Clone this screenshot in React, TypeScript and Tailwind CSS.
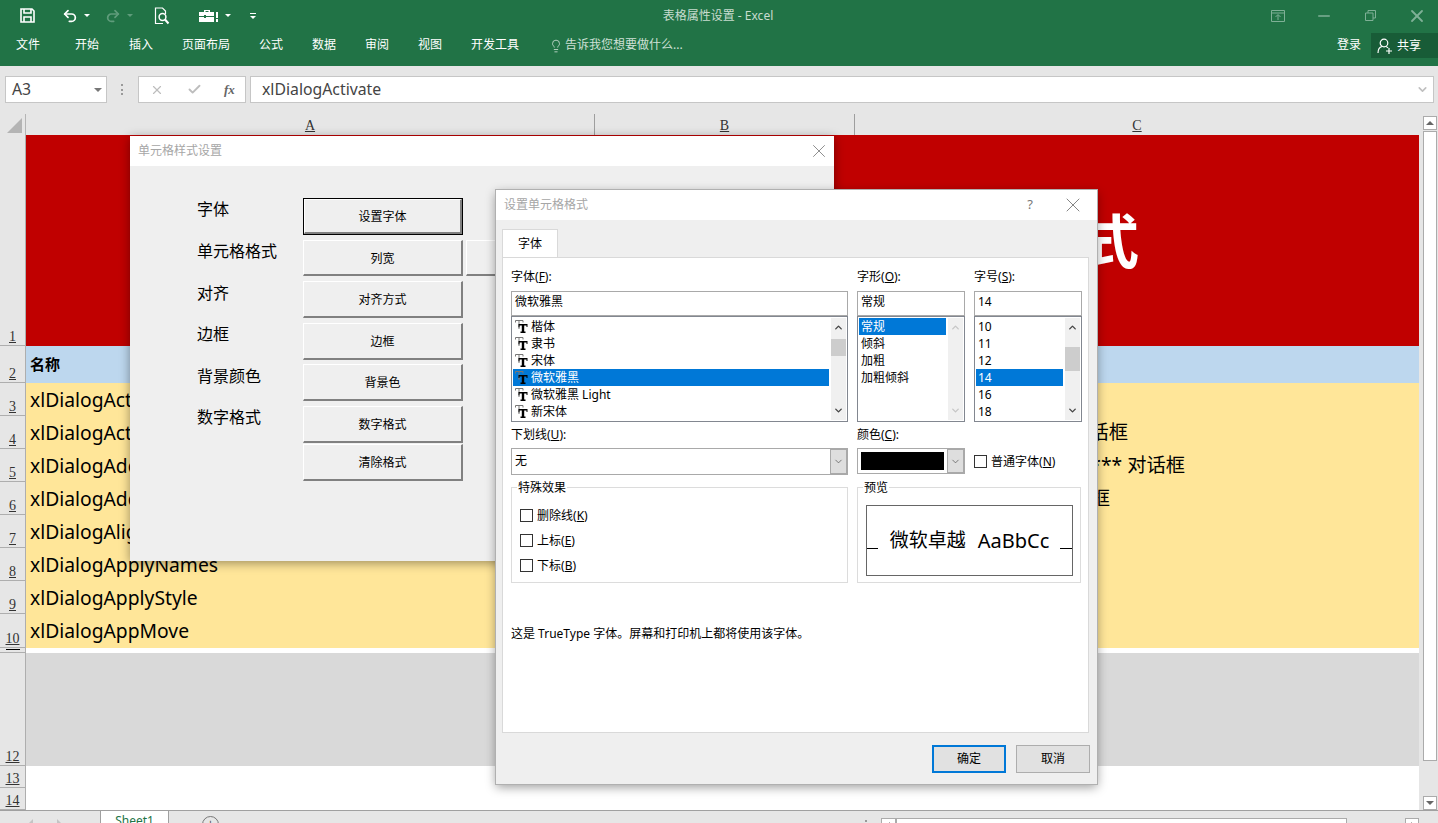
import React from 'react';
import { ChevronDown, ChevronUp, Lightbulb, Minus, Undo2, Redo2, X, Check } from 'lucide-react';

const serif = "font-['Liberation_Serif','Noto_Sans_CJK_SC',serif]";

const tabs = [
  ['文件', 'w-[75px] pl-[16px]'],
  ['开始', 'w-[54px]'],
  ['插入', 'w-[53px]'],
  ['页面布局', 'w-[77px]'],
  ['公式', 'w-[53px]'],
  ['数据', 'w-[53px]'],
  ['审阅', 'w-[53px]'],
  ['视图', 'w-[53px]'],
  ['开发工具', 'w-[78px]'],
];

function TitleBar() {
  return (
    <div className="relative flex h-[31px] items-center bg-[#217346] text-white">
      <svg className="ml-[20px] h-[15px] w-[15px]" viewBox="0 0 15 15" fill="none" stroke="white" strokeWidth="1.6">
        <path d="M1 1h11l2 2v11H1z" />
        <path d="M4 1v4h7V1M4 14V9h7v5" />
      </svg>
      <Undo2 className="ml-[27px] h-[16px] w-[16px]" strokeWidth={2.6} />
      <span className="ml-[6px] h-0 w-0 border-x-[3px] border-t-[3px] border-x-transparent border-t-white" />
      <Redo2 className="ml-[15px] h-[16px] w-[16px] text-[#5f9c7b]" strokeWidth={2.6} />
      <span className="ml-[6px] h-0 w-0 border-x-[3px] border-t-[3px] border-x-transparent border-t-[#5f9c7b]" />
      <svg className="ml-[21px] h-[18px] w-[16px]" viewBox="0 0 16 18" fill="none" stroke="white" strokeWidth="1.2">
        <path d="M9 16.5H1.5V1h7l3 3v3" />
        <circle cx="8.5" cy="10" r="3.4" strokeWidth="1.5" />
        <path d="M11 12.5l3.5 4" strokeWidth="2" />
      </svg>
      <svg className="ml-[29px] h-[14px] w-[20px]" viewBox="0 0 20 14" fill="white">
        <path d="M5 3V1h6v2h4v4H7V6H5v1H0V3zM6.500 2v1h3V2z" />
        <path d="M0 8h5v1h2V8h8v5H0zM17 3h2v6h-2zM17 10h2v3h-2z" />
      </svg>
      <span className="ml-[6px] h-0 w-0 border-x-[3px] border-t-[3px] border-x-transparent border-t-white" />
      <div className="ml-[19px] flex flex-col items-center gap-[2px]">
        <span className="h-px w-[6px] bg-white" />
        <span className="h-0 w-0 border-x-[3px] border-t-[3px] border-x-transparent border-t-white" />
      </div>
      <div className="absolute left-0 right-0 top-[7px] pr-[2px] text-center text-[12px] leading-[17px] text-[#c8dccf]">表格属性设置 - Excel</div>
      <div className="ml-auto flex items-center text-[#7fb096]">
        <svg className="mr-[30px] h-[12px] w-[14px]" viewBox="0 0 14 12" fill="none" stroke="currentColor">
          <path d="M.5.500h13v11H.5zM.5 3h13" />
          <path d="M7 10V5M4.500 7L7 4.500 9.500 7" />
        </svg>
        <Minus className="mr-[32px] h-[18px] w-[18px]" strokeWidth={2} />
        <svg className="mr-[31px] h-[11px] w-[11px]" viewBox="0 0 11 11" fill="none" stroke="currentColor">
          <path d="M.5 3h7.500v7.500H.5zM3 3V.5h7.500V8H8" />
        </svg>
        <X className="mr-[11px] h-[20px] w-[20px]" strokeWidth={2.2} />
      </div>
    </div>
  );
}

function RibbonTabs() {
  return (
    <div className="flex h-[35px] items-start bg-[#217346] text-[12px] leading-[28px] text-white">
      {tabs.map(([t, w]) => (
        <div key={t} className={w}>{t}</div>
      ))}
      <div className="flex items-center text-[#cfe0d6]">
        <Lightbulb className="mr-[2px] mt-[1px] h-[14px] w-[14px]" strokeWidth={1.4} />
        告诉我您想要做什么...
      </div>
      <div className="ml-auto pr-[10px]">登录</div>
      <div className="mt-[2px] flex h-[25px] w-[67px] items-center bg-[#185c37] pl-[6px] leading-[20px]">
        <svg className="mr-[4px] h-[16px] w-[16px]" viewBox="0 0 16 16" fill="none" stroke="white" strokeWidth="1.2">
          <circle cx="7" cy="5" r="3.800" />
          <path d="M1 15c0-4 2-6 4-6.500M9 8.500c1 .3 1.500.8 2 1.500M9 13h6M12 10v6" />
        </svg>
        共享
      </div>
    </div>
  );
}

function FormulaBar() {
  return (
    <div className="flex h-[48px] items-start bg-[#e6e6e6] pl-[5px] pr-[4px] pt-[10px]">
      <div className="flex h-[27px] w-[102px] items-center justify-between border border-[#c6c6c6] bg-white pl-[6px] pr-[4px] text-[15.8px] text-[#444]">
        A3
        <span className="h-0 w-0 border-x-[4px] border-t-[4px] border-x-transparent border-t-[#777]" />
      </div>
      <div className="ml-[14px] mt-[8px] flex h-[11px] flex-col justify-between">
        <span className="h-[2px] w-[2px] bg-[#999]" />
        <span className="h-[2px] w-[2px] bg-[#999]" />
        <span className="h-[2px] w-[2px] bg-[#999]" />
      </div>
      <div className="ml-[15px] flex h-[27px] w-[108px] items-center border border-[#c6c6c6] bg-white pl-[11px] text-[#bdbdbd]">
        <X className="h-[14px] w-[14px]" strokeWidth={2} />
        <Check className="ml-[23px] h-[15px] w-[15px]" strokeWidth={3} />
        <span className={`ml-[22px] text-[13px] font-bold italic text-[#666] ${serif}`}>fx</span>
      </div>
      <div className="ml-[4px] flex h-[27px] flex-1 items-center justify-between border border-[#c6c6c6] bg-white pl-[11px] pr-[4px] text-[15.8px] text-[#444]">
        xlDialogActivate
        <ChevronDown className="h-[13px] w-[13px] text-[#c0c0c0]" strokeWidth={3} />
      </div>
    </div>
  );
}

function ColumnHeaders() {
  return (
    <div className={`flex h-[21px] bg-[#e6e6e6] text-[14px] leading-[24px] text-[#333] ${serif}`}>
      <div className="flex w-[26px] items-end border-r border-[#b5b5b5] pb-[2px] pl-[7px]">
        <span className="h-0 w-0 border-b-[15px] border-l-[15px] border-b-[#b4b4b4] border-l-transparent" />
      </div>
      <div className="w-[569px] border-r border-[#9e9e9e] text-center underline">A</div>
      <div className="w-[260px] border-r border-[#9e9e9e] text-center underline">B</div>
      <div className="w-[564px] text-center underline">C</div>
    </div>
  );
}

const rows: { n: string; h: string; bg: string; text?: string; pad?: string; note?: string }[] = [
  { n: '1', h: 'h-[211px]', bg: 'bg-[#c00000]' },
  { n: '2', h: 'h-[37px]', bg: 'bg-[#bdd7ee]' },
  { n: '3', h: 'h-[33px]', bg: 'bg-[#ffe699]', text: 'xlDialogActivate' },
  { n: '4', h: 'h-[33px]', bg: 'bg-[#ffe699]', text: 'xlDialogActiveCellFont', note: '话框', pad: 'pr-[291px]' },
  { n: '5', h: 'h-[33px]', bg: 'bg-[#ffe699]', text: 'xlDialogAddChartAutoformat', note: '**** 对话框', pad: 'pr-[234px]' },
  { n: '6', h: 'h-[33px]', bg: 'bg-[#ffe699]', text: 'xlDialogAddinManager', note: '框', pad: 'pr-[309px]' },
  { n: '7', h: 'h-[33px]', bg: 'bg-[#ffe699]', text: 'xlDialogAlignment' },
  { n: '8', h: 'h-[33px]', bg: 'bg-[#ffe699]', text: 'xlDialogApplyNames' },
  { n: '9', h: 'h-[33px]', bg: 'bg-[#ffe699]', text: 'xlDialogApplyStyle' },
  { n: '10', h: 'h-[34px]', bg: 'bg-[#ffe699]', text: 'xlDialogAppMove' },
  { n: '', h: 'h-[5px]', bg: 'bg-white' },
  { n: '12', h: 'h-[113px]', bg: 'bg-[#d9d9d9]' },
  { n: '13', h: 'h-[22px]', bg: 'bg-white' },
  { n: '14', h: 'h-[22px]', bg: 'bg-white' },
];

function Sheet() {
  return (
    <div className="flex h-[675px] bg-[#e6e6e6]">
      <div className="w-[1419px]">
        {rows.map((r) => (
          <div key={r.n + r.h} className={`flex ${r.h}`}>
            <div className={`flex w-[26px] shrink-0 items-end justify-center border-b border-r border-[#aeaeae] bg-[#e6e6e6] text-[14px] leading-[17px] text-[#333] underline ${serif}`}>
              {r.n || <span className="mb-[2px] h-px w-[14px] bg-black" />}
            </div>
            <div className={`relative flex flex-1 items-center text-[19.3px] text-black ${r.bg}`}>
              {r.text && <span className="absolute left-[4px] mt-px whitespace-nowrap">{r.text}</span>}
              {r.note && <span className={`w-full whitespace-nowrap text-right ${r.pad}`}>{r.note}</span>}
              {r.n === '2' && <span className="pl-[4px] text-[15px] font-bold">名称</span>}
              {r.n === '1' && <span className="pl-[1055px] text-[58px] font-bold leading-none text-white">式</span>}
            </div>
          </div>
        ))}
      </div>
      <div className="ml-[4px] flex w-[14px] flex-col">
        <div className="mt-[-19px] flex h-[14px] items-center justify-center border border-[#ababab] bg-white">
          <span className="h-0 w-0 border-x-[4px] border-b-[4px] border-x-transparent border-b-[#666]" />
        </div>
        <div className="mt-px h-[630px] border border-[#ababab] bg-white" />
        <div className="mt-auto flex h-[14px] items-center justify-center border border-[#ababab] bg-white">
          <span className="h-0 w-0 border-x-[4px] border-t-[4px] border-x-transparent border-t-[#666]" />
        </div>
      </div>
    </div>
  );
}

function SheetTabs() {
  return (
    <div className="flex h-[13px] items-start overflow-hidden border-t border-[#a0a0a0] bg-[#e6e6e6]">
      <div className="flex w-[100px] items-center gap-[24px] pl-[29px] pt-[8px]">
        <span className="h-0 w-0 border-y-[4px] border-r-[4px] border-y-transparent border-r-[#c4c4c4]" />
        <span className="h-0 w-0 border-y-[4px] border-l-[4px] border-y-transparent border-l-[#c4c4c4]" />
      </div>
      <div className="mt-[-1px] h-[16px] w-[69px] border-x border-[#a0a0a0] bg-white pt-[3px] text-center text-[12px] leading-[16px] text-[#217346]">Sheet1</div>
      <div className="ml-[33px] mt-[5px] h-[17px] w-[17px] rounded-full border border-[#777] text-center text-[12px] leading-[14px] text-[#555]">+</div>
      <div className="ml-auto mt-[3px] flex">
        <div className="mt-[6px] h-[2px] w-[2px] bg-[#999]" />
        <div className="ml-[14px] mt-[4px] flex h-[14px] w-[15px] items-center justify-center border border-[#ababab] bg-white">
          <span className="h-0 w-0 border-y-[3px] border-r-[3px] border-y-transparent border-r-[#666]" />
        </div>
        <div className="mt-[4px] h-[14px] w-[451px] border border-[#ababab] bg-white" />
        <div className="mt-[4px] h-[14px] w-[58px]" />
        <div className="mt-[4px] flex h-[14px] w-[14px] items-center justify-center border border-[#ababab] bg-white">
          <span className="h-0 w-0 border-y-[3px] border-l-[3px] border-y-transparent border-l-[#666]" />
        </div>
        <div className="w-[19px]" />
      </div>
    </div>
  );
}

function OldButton({ label, first, w = 'w-[160px]', h = 'h-[37px]' }: { label: string; first?: boolean; w?: string; h?: string }) {
  return (
    <div className={`${first ? 'border border-black' : ''} ${w} ${h} shrink-0`}>
      <div className="flex h-full items-center justify-center border-b-2 border-l border-r-2 border-t border-b-[#808080] border-l-white border-r-[#808080] border-t-white bg-[#efefef] pt-[2px] text-[12px] text-black">
        {label}
      </div>
    </div>
  );
}

function StyleDialog() {
  const labels = [
    ['字体', 'h-[42px]'],
    ['单元格格式', 'h-[42px]'],
    ['对齐', 'h-[41px]'],
    ['边框', 'h-[42px]'],
    ['背景颜色', 'h-[41px]'],
    ['数字格式', 'h-[42px]'],
  ];
  return (
    <div className="absolute left-[130px] top-[136px] h-[425px] w-[704px] bg-[#efefef] shadow-[0_2px_10px_rgba(0,0,0,0.4)]">
      <div className="flex h-[30px] items-center justify-between bg-white pl-[8px] pr-[4px] text-[12px] text-[#a6a6a6]">
        单元格样式设置
        <X className="h-[22px] w-[22px] text-[#777]" strokeWidth={0.9} />
      </div>
      <div className="flex pl-[67px] pt-[32px]">
        <div className="mt-[-1px] w-[106px] text-[16px] leading-[24px] text-black">
          {labels.map(([t, h]) => (
            <div key={t} className={h}>{t}</div>
          ))}
        </div>
        <div className="flex flex-col">
          <OldButton label="设置字体" first />
          <div className="mt-[5px] flex gap-[3px]">
            <OldButton label="列宽" h="h-[36px]" />
            <OldButton label="行高" w="w-[100px]" h="h-[36px]" />
          </div>
          <div className="mt-[5px]"><OldButton label="对齐方式" /></div>
          <div className="mt-[5px]"><OldButton label="边框" /></div>
          <div className="mt-[4px]"><OldButton label="背景色" /></div>
          <div className="mt-[5px]"><OldButton label="数字格式" /></div>
          <div className="mt-px"><OldButton label="清除格式" /></div>
        </div>
      </div>
    </div>
  );
}

// TrueType mark in the font list: a thin grey T behind a heavy black one
function TT() {
  return (
    <svg className="mr-[3px] h-[13px] w-[13px] shrink-0" viewBox="0 0 13 13">
      <path d="M.5 2.500V.5h7.500v2M4 .5v7.500M3 8h2" fill="none" stroke="#777" />
      <path d="M3.500 4h9v3h-1V5.500H9.200V11.500h1.300V13H5.500v-1.500h1.300V5.500H4.500V7h-1z" fill="#000" />
    </svg>
  );
}

function ScrollArrows({ thumb, dim }: { thumb?: string; dim?: boolean }) {
  return (
    <div className={`absolute bottom-[1px] right-[1px] top-[1px] flex w-[15px] flex-col items-center justify-between bg-[#f0f0f0] py-[4px] ${dim ? 'text-[#c6c6c6]' : 'text-[#444]'}`}>
      <ChevronUp className="h-[11px] w-[11px]" strokeWidth={3} />
      {thumb && <div className={`absolute left-0 right-0 bg-[#cdcdcd] ${thumb}`} />}
      <ChevronDown className="h-[11px] w-[11px]" strokeWidth={3} />
    </div>
  );
}

function Field({
  label, mark, value, items, selected, icons, thumb, dim, w,
}: {
  label: string; mark: string; value: string; items: string[]; selected: number; icons?: boolean; thumb?: string; dim?: boolean; w: string;
}) {
  return (
    <div className={w}>
      <div className="h-[23px] text-[12px] leading-[18px]">{label}(<u>{mark}</u>):</div>
      <div className="h-[25px] border border-[#a9a9a9] px-[3px] text-[12px] leading-[20px]">{value}</div>
      <div className="relative h-[106px] border border-[#828790] p-px text-[12px] leading-[17px]">
        {items.map((t, i) => (
          <div key={t} className={`mr-[17px] flex h-[17px] items-center pl-[2px] ${i === selected ? 'bg-[#0078d7] text-white' : ''}`}>
            {icons && <TT />}
            {t}
          </div>
        ))}
        <ScrollArrows thumb={thumb} dim={dim} />
      </div>
    </div>
  );
}

function ComboArrow() {
  return (
    <div className="flex h-full w-[17px] items-center justify-center border border-[#a9a9a9] bg-[#dedede]">
      <ChevronDown className="h-[11px] w-[11px] text-[#555]" strokeWidth={1.6} />
    </div>
  );
}

function Box({ label, mark }: { label: string; mark: string }) {
  return (
    <div className="flex h-[13px] items-center text-[12px]">
      <span className="mr-[4px] h-[13px] w-[13px] border border-[#333] bg-white" />
      {label}(<u>{mark}</u>)
    </div>
  );
}

function FormatDialog() {
  return (
    <div className="absolute left-[496px] top-[190px] h-[594px] w-[601px] bg-[#efefef] text-black shadow-[0_0_0_1px_#b0b0b0,0_3px_10px_rgba(0,0,0,0.4)]">
      <div className="flex h-[30px] items-center bg-white pl-[8px] pr-[12px] text-[12px] text-[#a6a6a6]">
        设置单元格格式
        <span className="ml-auto mr-[28px] text-[13px] text-[#777]">?</span>
        <X className="h-[24px] w-[24px] text-[#777]" strokeWidth={0.9} />
      </div>
      <div className="ml-[6px] mt-[9px] h-[28px] w-[56px] border-x border-t border-[#d9d9d9] bg-white text-center text-[12px] leading-[28px]">字体</div>
      <div className="ml-[6px] h-[476px] w-[587px] border border-[#d9d9d9] bg-white pl-[8px] pt-[10px]">
        <div className="flex gap-[9px]">
          <Field
            w="w-[337px]" label="字体" mark="F" value="微软雅黑" selected={3} icons thumb="top-[21px] h-[17px]"
            items={['楷体', '隶书', '宋体', '微软雅黑', '微软雅黑 Light', '新宋体']}
          />
          <Field
            w="w-[108px]" label="字形" mark="O" value="常规" selected={0} dim
            items={['常规', '倾斜', '加粗', '加粗倾斜']}
          />
          <Field
            w="w-[108px]" label="字号" mark="S" value="14" selected={3} thumb="top-[29px] h-[24px]"
            items={['10', '11', '12', '14', '16', '18']}
          />
        </div>
        <div className="mt-[6px] flex gap-[9px] text-[12px]">
          <div className="w-[337px]">
            <div className="h-[20px] leading-[14px]">下划线(<u>U</u>):</div>
            <div className="flex h-[27px] items-center justify-between border border-[#a9a9a9] pl-[3px]">
              <span className="pb-[2px]">无</span>
              <ComboArrow />
            </div>
          </div>
          <div className="w-[108px]">
            <div className="h-[20px] leading-[14px]">颜色(<u>C</u>):</div>
            <div className="flex h-[26px] items-center border border-[#a9a9a9] pl-[3px]">
              <div className="mr-[3px] h-[18px] w-[84px] bg-black" />
              <ComboArrow />
            </div>
          </div>
          <div className="pt-[27px]"><Box label="普通字体" mark="N" /></div>
        </div>
        <div className="mt-[12px] flex gap-[9px] text-[12px]">
          <div className="relative flex h-[96px] w-[337px] flex-col gap-[12px] border border-[#dcdcdc] pl-[8px] pt-[21px]">
            <span className="absolute left-[5px] top-[-7px] bg-white px-px leading-[14px]">特殊效果</span>
            <Box label="删除线" mark="K" />
            <Box label="上标" mark="E" />
            <Box label="下标" mark="B" />
          </div>
          <div className="relative h-[96px] w-[224px] border border-[#dcdcdc] pl-[8px] pt-[17px]">
            <span className="absolute left-[5px] top-[-7px] bg-white px-px leading-[14px]">预览</span>
            <div className="relative flex h-[71px] w-[207px] items-center justify-center border border-[#666] text-[19px]">
              <span className="absolute left-0 top-[42px] h-px w-[11px] bg-black" />
              微软卓越
              <span className="ml-[12px] text-[20px]">AaBbCc</span>
              <span className="absolute right-0 top-[42px] h-px w-[12px] bg-black" />
            </div>
          </div>
        </div>
        <p className="mt-[43px] text-[12px] leading-[16px]">这是 TrueType 字体。屏幕和打印机上都将使用该字体。</p>
      </div>
      <div className="mt-[12px] flex justify-end gap-[10px] pr-[7px] text-[12px]">
        <div className="flex h-[28px] w-[74px] items-center justify-center border-2 border-[#0078d7] bg-[#e1e1e1]">确定</div>
        <div className="flex h-[28px] w-[74px] items-center justify-center border border-[#adadad] bg-[#e1e1e1]">取消</div>
      </div>
    </div>
  );
}

export default function App() {
  return (
    <div className="relative h-[823px] w-[1438px] overflow-hidden bg-white font-['Noto_Sans','Noto_Sans_CJK_SC',sans-serif]">
      <TitleBar />
      <RibbonTabs />
      <FormulaBar />
      <ColumnHeaders />
      <Sheet />
      <SheetTabs />
      <StyleDialog />
      <FormatDialog />
    </div>
  );
}
